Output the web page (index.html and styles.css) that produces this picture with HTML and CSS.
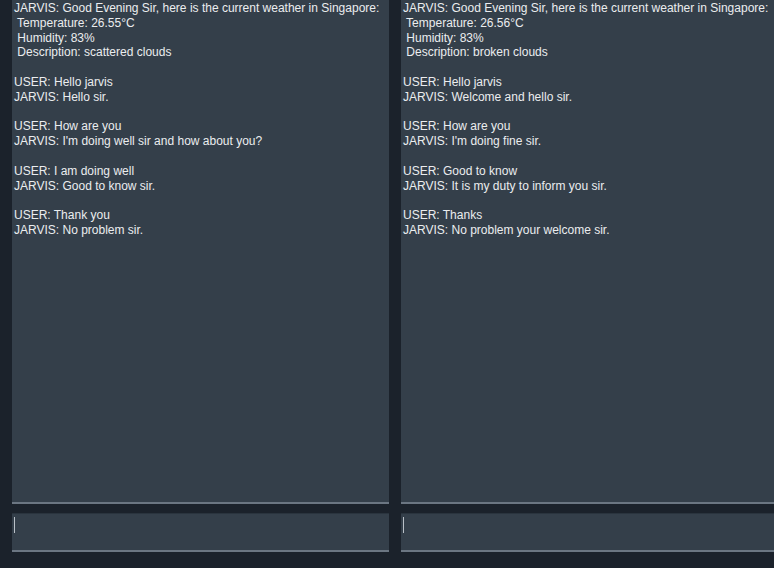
FILE: index.html
```html
<!DOCTYPE html>
<html>
<head>
<meta charset="utf-8">
<link rel="stylesheet" href="styles.css">
</head>
<body>
<div class="app">
  <section class="pane">
    <div class="log">JARVIS: Good Evening Sir, here is the current weather in Singapore:
 Temperature: 26.55°C
 Humidity: 83%
 Description: scattered clouds

USER: Hello jarvis
JARVIS: Hello sir.

USER: How are you
JARVIS: I'm doing well sir and how about you?

USER: I am doing well
JARVIS: Good to know sir.

USER: Thank you
JARVIS: No problem sir.</div>
    <div class="input"><span class="caret"></span></div>
  </section>
  <section class="pane">
    <div class="log">JARVIS: Good Evening Sir, here is the current weather in Singapore:
 Temperature: 26.56°C
 Humidity: 83%
 Description: broken clouds

USER: Hello jarvis
JARVIS: Welcome and hello sir.

USER: How are you
JARVIS: I'm doing fine sir.

USER: Good to know
JARVIS: It is my duty to inform you sir.

USER: Thanks
JARVIS: No problem your welcome sir.</div>
    <div class="input"><span class="caret"></span></div>
  </section>
</div>
</body>
</html>
```
FILE: styles.css
```css
html, body {
  margin: 0;
  padding: 0;
  background: #1b222b;
  overflow: hidden;
}
.app {
  display: flex;
  gap: 12px;
  padding-left: 12px;
  width: 778px;
  height: 568px;
}
.pane {
  flex: 0 0 377px;
  width: 377px;
  min-width: 0;
  display: flex;
  flex-direction: column;
}
.log {
  box-sizing: border-box;
  height: 504px;
  padding: 1px 0 0 2px;
  background: #343f4a;
  border-bottom: 2px solid #6b7682;
  color: #ebedef;
  font-family: "Liberation Sans", Arial, sans-serif;
  font-size: 12px;
  line-height: 14.8px;
  white-space: pre;
  overflow: hidden;
}
.input {
  margin-top: 9px;
  height: 36px;
  background: #343f4a;
  border-top: 1px solid #2a343e;
  border-bottom: 2px solid #6b7682;
  display: flex;
  align-items: flex-start;
  padding-left: 2px;
}
.caret {
  width: 1px;
  height: 16px;
  margin-top: 3px;
  background: #b9c0c7;
}
```
